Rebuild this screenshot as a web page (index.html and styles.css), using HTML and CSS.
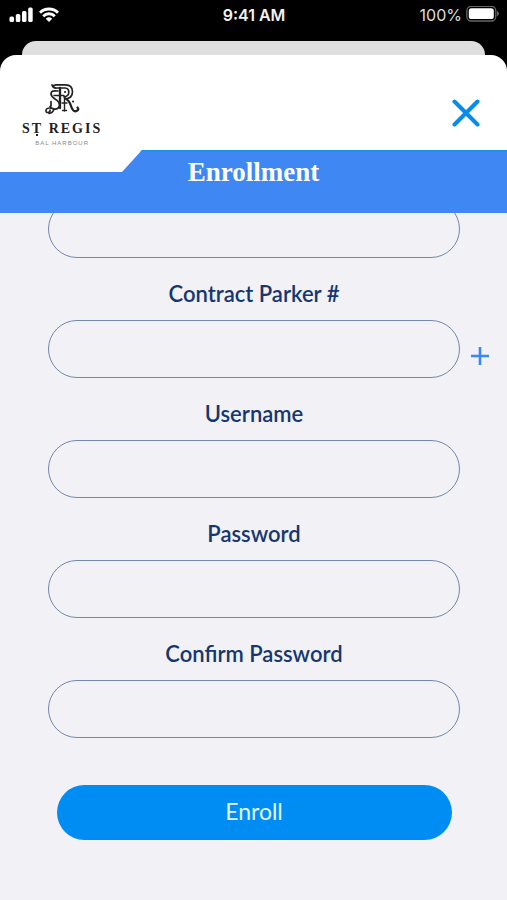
FILE: index.html
```html
<!DOCTYPE html>
<html lang="en">
<head>
<meta charset="utf-8">
<meta name="viewport" content="width=device-width, initial-scale=1">
<title>Enrollment</title>
<link rel="stylesheet" href="styles.css">
</head>
<body>
<div class="status">
  <div class="status-left">
    <svg width="24" height="16" viewBox="0 0 24 16" fill="#fff" aria-hidden="true">
      <rect x="0.500" y="9.500" width="4.500" height="5.500" rx="1.5"/>
      <rect x="6.800" y="7" width="4.500" height="8" rx="1.5"/>
      <rect x="13" y="4" width="4.500" height="11" rx="1.5"/>
      <rect x="19.200" y="0.500" width="4.500" height="14.500" rx="1.5"/>
    </svg>
    <svg width="20" height="16" viewBox="0 0 20 16" aria-hidden="true">
      <g fill="none" stroke="#fff" stroke-width="2.900">
        <path d="M1 5.700a12.700 12.700 0 0 1 18 0"/>
        <path d="M4.200 9.200a8.200 8.200 0 0 1 11.600 0"/>
      </g>
      <path d="M6.800 11.700a4.900 4.900 0 0 1 6.400 0L10 15z" fill="#fff"/>
    </svg>
  </div>
  <div class="clock">9:41 AM</div>
  <div class="status-right">
    <span>100%</span>
    <svg width="33" height="17" viewBox="0 0 33 17" aria-hidden="true">
      <rect x="0.800" y="0.300" width="29" height="14.700" rx="4.500" fill="none" stroke="#666" stroke-width="1.300"/>
      <rect x="2.800" y="2.300" width="25" height="10.700" rx="2.600" fill="#fff"/>
      <path d="M31 5q2 .8 2 2.600t-2 2.600z" fill="#666"/>
    </svg>
  </div>
</div>
<div class="back-sheet"></div>
<main class="sheet">
  <header class="top">
    <div class="logo">
      <svg width="37" height="32" viewBox="0 0 37 32" fill="none" stroke="#222" stroke-linecap="round" aria-hidden="true">
        <path stroke-width="1.700" d="M8 2Q9 3.500 12 1.800h9.500q7 0 7 7 0 6.700-7.500 7.200M8 2Q9 5.500 13 5h8q4 .3 3.800 4.500-.3 3.800-4.800 4.300"/>
        <path stroke-width="2.300" d="M16 5v20M21.500 15.500Q25 17 27 23q2 6.500 5.500 5 3-1.500 1-3.500"/>
        <path stroke-width="1.700" d="M14 8Q7 7 7 10.500q0 3 4 5.500 5 3 4.500 6.500-1 4-5.500 3.500-3-.3-4-2.500M7 18.500v4.500"/>
        <path stroke-width="1.400" d="M10 12.500h10M20.500 14v14M18.500 27.500h4M18 20h5"/>
        <path stroke-width="1.600" d="M9 25.500q-6-1.500-7 1.500-.3 3 2.500 2.500 2-1 1.500-2.500M10 26q-1 4-5 4.500"/>
        <path stroke-width="2" d="M21 9h.1M29 18.500h.1"/>
      </svg>
      <div class="brand"><span>S</span><span class="brand-t">T</span> <span>REGIS</span></div>
      <div class="place">BAL HARBOUR</div>
    </div>
    <button class="close" type="button" aria-label="Close">
      <svg width="28" height="28" viewBox="0 0 28 28" fill="none" stroke="#078cee" stroke-width="4" stroke-linecap="round"><path d="M2.500 2.500l23 23M25.500 2.500l-23 23"/></svg>
    </button>
  </header>
  <div class="band"><h1>Enrollment</h1></div>
  <form class="form">
    <div class="field first"><input type="text" aria-label="Previous field"></div>
    <div class="field">
      <label for="parker">Contract Parker #</label>
      <div class="row">
        <input id="parker" type="text">
        <button class="add" type="button" aria-label="Add contract parker number">
          <svg width="18" height="18" viewBox="0 0 18 18" fill="none" stroke="#3c88f0" stroke-width="2.600"><path d="M9 0v18M0 9h18"/></svg>
        </button>
      </div>
    </div>
    <div class="field"><label for="user">Username</label><input id="user" type="text"></div>
    <div class="field"><label for="pass">Password</label><input id="pass" type="password"></div>
    <div class="field"><label for="confirm">Confirm Password</label><input id="confirm" type="password"></div>
    <button class="enroll" type="submit">Enroll</button>
  </form>
</main>
</body>
</html>
```
FILE: styles.css
```css
* { box-sizing: border-box; }

body {
  margin: 0;
  min-height: 100vh;
  display: flex;
  flex-direction: column;
  background: #000;
  font-family: Lato, "Liberation Sans", sans-serif;
}

svg { display: block; }

button {
  padding: 0;
  border: 0;
  background: none;
  font: inherit;
}

.status {
  height: 41px;
  padding: 0 8px 12px 9px;
  display: grid;
  grid-template-columns: 1fr auto 1fr;
  align-items: center;
  color: #f2f2f2;
  font: 16px/20px Inter, "Liberation Sans", sans-serif;
}

.status-left,
.status-right {
  display: flex;
  align-items: center;
  gap: 6px;
}

.status-right {
  justify-content: flex-end;
  gap: 4px;
  color: #ddd;
}

.clock { font-weight: 600; }

.back-sheet {
  height: 14px;
  margin: 0 22px;
  border-radius: 14px 14px 0 0;
  background: #dfdfdf;
}

.sheet {
  flex: 1;
  display: flex;
  flex-direction: column;
  border-radius: 16px 16px 0 0;
  background: #fff;
}

.top {
  height: 95px;
  padding: 28px 27px 0 22px;
  display: flex;
  justify-content: space-between;
  align-items: flex-start;
}

.logo {
  display: flex;
  flex-direction: column;
  align-items: center;
  color: #222;
}

.brand {
  margin-top: 6px;
  font: bold 14px/16px "Liberation Serif", serif;
  letter-spacing: 2px;
  white-space: nowrap;
}

.brand-t { position: relative; }

.brand-t::after {
  content: "";
  position: absolute;
  left: 4px;
  bottom: 0;
  width: 2px;
  height: 2px;
  background: #222;
}

.place {
  margin-top: 2px;
  color: #888;
  font: 6px/8px "Liberation Sans", sans-serif;
  letter-spacing: 1px;
}

.close { margin-top: 16px; }

.band {
  height: 63px;
  padding-top: 6px;
  border-top: 2px solid #1c96ec;
  background: #3f88f3;
  clip-path: polygon(0 22px, 122px 22px, 142px 0, 100% 0, 100% 100%, 0 100%);
  text-align: center;
}

h1 {
  margin: 0;
  color: #fff;
  font: bold 27px/28px "Liberation Serif", serif;
}

.form {
  flex: 1;
  padding: 0 47px 60px 48px;
  overflow: hidden;
  background: #f1f1f6;
}

.field {
  display: flex;
  flex-direction: column;
}

.first { margin-top: -13px; }

.field label {
  height: 62px;
  padding-top: 22px;
  color: #15366f;
  font-size: 22px;
  font-weight: 600;
  line-height: 28px;
  text-align: center;
}

.field input {
  width: 100%;
  height: 58px;
  padding: 0 24px;
  border: 1px solid #7388ad;
  border-radius: 32px;
  background: transparent;
  color: #15366f;
  font: 22px Lato, sans-serif;
}

.row { position: relative; }

.add {
  position: absolute;
  top: 27px;
  right: -29px;
}

.enroll {
  display: block;
  width: calc(100% - 17px);
  height: 55px;
  margin: 47px auto 0;
  padding-bottom: 3px;
  border-radius: 28px;
  background: #008df3;
  color: #e4f5ff;
  font-size: 23px;
}
```
